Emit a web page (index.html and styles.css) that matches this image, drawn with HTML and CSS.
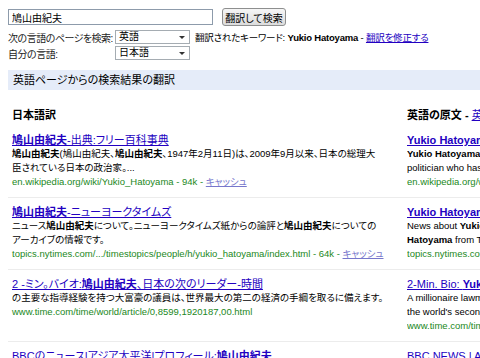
FILE: index.html
```html
<!DOCTYPE html>
<html lang="ja">
<head>
  <meta charset="UTF-8" />
  <title>翻訳して検索</title>
  <link rel="stylesheet" href="styles.css">
</head>
<body>
  <div class="page">
    <form class="search">
      <div class="search-row">
        <input class="query" type="text" value="鳩山由紀夫">
        <button class="btn" type="button">翻訳して検索</button>
      </div>
      <div class="opt-row">
        <span class="opt-label">次の言語のページを検索:</span>
        <div class="select">英語<span class="arrow"></span></div>
        <span class="kw">翻訳されたキーワード: <b>Yukio Hatoyama</b> - <a href="#">翻訳を修正する</a></span>
      </div>
      <div class="opt-row">
        <span class="opt-label">自分の言語:</span>
        <div class="select">日本語<span class="arrow"></span></div>
      </div>
    </form>

    <div class="bar">英語ページからの検索結果の翻訳</div>

    <div class="results">
      <div class="head">日本語訳</div>
      <div class="head en">英語の原文 - <a href="#">英語</a></div>

      <!-- result 1 -->
      <div class="cell">
        <a class="title" href="#"><b>鳩山由紀夫</b>-出典:フリー百科事典</a>
        <div class="snip"><b>鳩山由紀夫</b>(鳩山由紀夫、<b>鳩山由紀夫</b>、1947年2月11日)は、2009年9月以来、日本の総理大<br>臣されている日本の政治家。...</div>
        <div class="url">en.wikipedia.org/wiki/Yukio_Hatoyama - 94k - <a href="#">キャッシュ</a></div>
      </div>
      <div class="cell en">
        <a class="title" href="#"><b>Yukio Hatoyama</b> - Wikipedia, the free encyclopedia</a>
        <div class="snip"><b>Yukio Hatoyama</b> (鳩山由紀夫, Hatoyama Yukio, born 11 February<br>politician who has been the Prime Minister of Japan</div>
        <div class="url">en.wikipedia.org/wiki/Yukio_Hatoyama</div>
      </div>

      <!-- result 2 -->
      <div class="cell">
        <a class="title" href="#"><b>鳩山由紀夫</b>-ニューヨークタイムズ</a>
        <div class="snip">ニュース<b>鳩山由紀夫</b>について。ニューヨークタイムズ紙からの論評と<b>鳩山由紀夫</b>についての<br>アーカイブの情報です。</div>
        <div class="url">topics.nytimes.com/.../timestopics/people/h/yukio_hatoyama/index.html - 64k - <a href="#">キャッシュ</a></div>
      </div>
      <div class="cell en">
        <a class="title" href="#"><b>Yukio Hatoyama</b> News - The New York Times</a>
        <div class="snip">News about <b>Yukio</b><br><b>Hatoyama</b> from The New York Times</div>
        <div class="url">topics.nytimes.com/top/reference/timestopics/people</div>
      </div>

      <!-- result 3 -->
      <div class="cell">
        <a class="title" href="#">2 -ミン。バイオ:<b>鳩山由紀夫</b>、日本の次のリーダー-時間</a>
        <div class="snip">の主要な指導経験を持つ大富豪の議員は、世界最大の第二の経済の手綱を取るに備えます。</div>
        <div class="url">www.time.com/time/world/article/0,8599,1920187,00.html</div>
      </div>
      <div class="cell en">
        <a class="title" href="#">2-Min. Bio: <b>Yukio Hatoyama</b>, Japan's Next Leader</a>
        <div class="snip">A millionaire lawmaker with scant leadership experience<br>the world's second largest economy</div>
        <div class="url">www.time.com/time/world/article/0,8599,1920187,00.html</div>
      </div>

      <!-- result 4 -->
      <div class="cell">
        <a class="title" href="#">BBCのニュース|アジア太平洋|プロフィール:<b>鳩山由紀夫</b></a>
      </div>
      <div class="cell en">
        <a class="title" href="#">BBC NEWS | Asia-Pacific | Profile: <b>Yukio Hatoyama</b></a>
      </div>
    </div>
  </div>
</body>
</html>
```

FILE: styles.css
```css
html, body {
  margin: 0;
  overflow: hidden;
}
body {
  padding: 8px;
  font-family: "Liberation Sans", "Noto Sans CJK JP", sans-serif;
  font-size: 9.5px;
  font-feature-settings: "palt";
  color: #000;
  background: #fff;
}
a {
  color: #2200c1;
}
.page {
  width: 760px;
}

/* search form */
.search-row {
  display: flex;
  align-items: center;
  gap: 9px;
  height: 18px;
  margin-bottom: 3px;
}
.query {
  width: 205px;
  height: 16px;
  box-sizing: border-box;
  border: 1px solid #8d9bab;
  padding: 0 3px;
  margin: 0;
  font: inherit;
  font-size: 10px;
}
.btn {
  height: 18px;
  width: 64px;
  padding: 0;
  border: 1px solid #8e8f8f;
  border-radius: 3px;
  background: linear-gradient(#f6f6f6, #dcdcdc);
  font: inherit;
  font-size: 10px;
}
.opt-row {
  display: flex;
  align-items: center;
  height: 16px;
  white-space: nowrap;
}
.opt-label {
  flex: none;
  width: 107px;
  color: #222;
  font-size: 10px;
  letter-spacing: -0.5px;
}
.select {
  flex: none;
  position: relative;
  width: 75px;
  height: 14px;
  box-sizing: border-box;
  border: 1px solid #a5acb2;
  padding-left: 3px;
  line-height: 12px;
  font-size: 10px;
}
.arrow {
  position: absolute;
  right: 4px;
  top: 5px;
  border-left: 3px solid transparent;
  border-right: 3px solid transparent;
  border-top: 3px solid #333;
}
.kw {
  margin-left: 5px;
  font-size: 9.5px;
  letter-spacing: -0.2px;
}

/* blue bar */
.bar {
  margin-top: 9px;
  margin-right: -300px;
  height: 20px;
  line-height: 20px;
  padding-left: 5px;
  background: #e5ecf9;
  font-size: 11px;
}

/* results */
.results {
  display: grid;
  grid-template-columns: 399px 360px;
}
.head {
  padding: 18px 0 4px 4px;
  line-height: 14px;
  font-size: 11px;
  font-weight: bold;
}
.head.en {
  padding-left: 0;
}
.head a {
  font-weight: normal;
}
.cell {
  padding: 7px 0 8px 4px;
  border-bottom: 1px solid #ececec;
  line-height: 14px;
  white-space: nowrap;
  overflow: hidden;
}
.cell.en {
  padding-left: 0;
}
.title {
  display: block;
  font-size: 11px;
}
.url {
  color: #228822;
}
.url a {
  color: #7777cc;
}
```
